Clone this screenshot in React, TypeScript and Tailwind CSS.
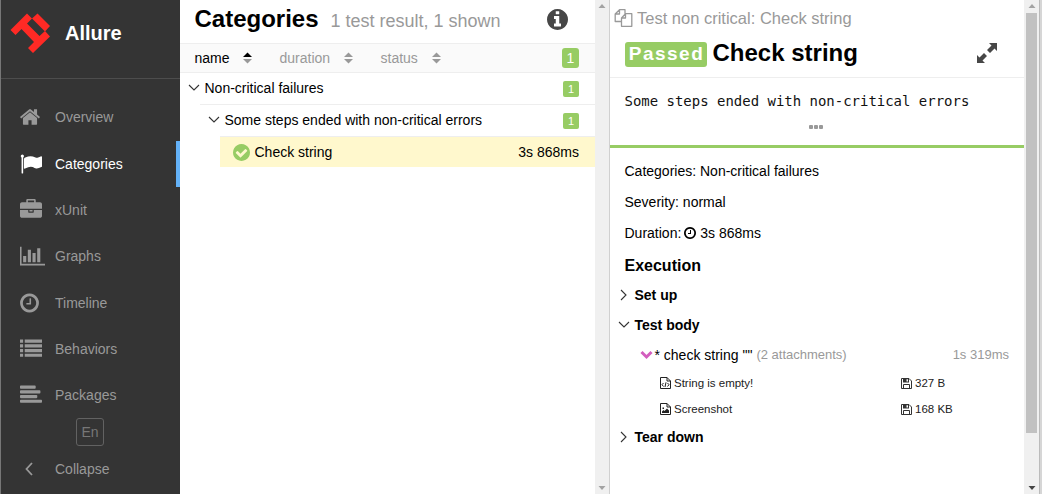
import type { ReactNode } from "react";

const CIRCLE =
  "M1664 896q0 209-103 385.5t-279.5 279.5-385.5 103-385.5-103-279.5-279.5-103-385.5 103-385.5 279.5-279.5 385.5-103 385.5 103 279.5 279.5 103 385.5z";

const PATHS = {
  home: "M1472 992v480q0 26-19 45t-45 19h-384v-384h-256v384h-384q-26 0-45-19t-19-45v-480q0-1 .5-3t.5-3l575-474 575 474q1 2 1 6zm223-69l-62 74q-8 9-21 11h-3q-13 0-21-7l-692-577-692 577q-12 8-24 7-13-2-21-11l-62-74q-8-10-7-23.5t11-21.5l719-599q32-26 76-26t76 26l244 204v-195q0-14 9-23t23-9h192q14 0 23 9t9 23v408l219 182q10 8 11 21.5t-7 23.5z",
  flag: "M320 256q0 72-64 110v1266q0 13-9.5 22.5t-22.5 9.5h-64q-13 0-22.5-9.5t-9.5-22.5v-1266q-64-38-64-110 0-53 37.5-90.5t90.5-37.5 90.5 37.5 37.5 90.5zm1472 64v763q0 25-12.5 38.5t-39.5 27.5q-215 116-369 116-61 0-123.5-22t-108.5-48-115.5-48-142.5-22q-192 0-464 146-17 9-33 9-26 0-45-19t-19-45v-742q0-32 31-55 21-14 79-43 236-120 421-120 107 0 200 29t219 88q38 19 88 19 54 0 117.5-21t110-47 88-47 54.5-21q26 0 45 19t19 45z",
  briefcase:
    "M640 256h512v-128h-512v128zm1152 640v480q0 66-47 113t-113 47h-1472q-66 0-113-47t-47-113v-480h672v160q0 26 19 45t45 19h320q26 0 45-19t19-45v-160h672zm-768 0v128h-256v-128h256zm768-480v384h-1792v-384q0-66 47-113t113-47h352v-160q0-40 28-68t68-28h576q40 0 68 28t28 68v160h352q66 0 113 47t47 113z",
  chart:
    "M512 896v512h-256v-512zM896 384v1024h-256v-1024zM2048 1536v128h-2048v-1536h128v1408zM1280 640v768h-256v-768zM1664 256v1152h-256v-1152z",
  clock:
    "M1024 544v448q0 14-9 23t-23 9h-320q-14 0-23-9t-9-23v-64q0-14 9-23t23-9h224v-352q0-14 9-23t23-9h64q14 0 23 9t9 23zm416 352q0-148-73-273t-198-198-273-73-273 73-198 198-73 273 73 273 198 198 273 73 273-73 198-198 73-273zm224 0q0 209-103 385.5t-279.5 279.5-385.5 103-385.5-103-279.5-279.5-103-385.5 103-385.5 279.5-279.5 385.5-103 385.5 103 279.5 279.5 103 385.5z",
  list: "M0 128h256v256h-256zM384 128h1408v256h-1408zM0 512h256v256h-256zM384 512h1408v256h-1408zM0 896h256v256h-256zM384 896h1408v256h-1408zM0 1280h256v256h-256zM384 1280h1408v256h-1408z",
  align:
    "M64 128h1150q64 0 64 64v128q0 64-64 64h-1150q-64 0-64-64v-128q0-64 64-64zM64 512h1534q64 0 64 64v128q0 64-64 64h-1534q-64 0-64-64v-128q0-64 64-64zM64 896h1280q64 0 64 64v128q0 64-64 64h-1280q-64 0-64-64v-128q0-64 64-64zM64 1280h1664q64 0 64 64v128q0 64-64 64h-1664q-64 0-64-64v-128q0-64 64-64z",
  info:
    "M1152 1376v-160q0-14-9-23t-23-9h-96v-512q0-14-9-23t-23-9h-320q-14 0-23 9t-9 23v160q0 14 9 23t23 9h96v320h-96q-14 0-23 9t-9 23v160q0 14 9 23t23 9h448q14 0 23-9t9-23zm-128-896v-160q0-14-9-23t-23-9h-192q-14 0-23 9t-9 23v160q0 14 9 23t23 9h192q14 0 23-9t9-23z" +
    CIRCLE,
  check:
    "M1412 734q0-28-18-46l-91-90q-19-19-45-19t-45 19l-408 407-226-226q-19-19-45-19t-45 19l-91 90q-18 18-18 46 0 27 18 45l362 362q19 19 45 19 27 0 46-19l543-543q18-18 18-45z" +
    CIRCLE,
};

function Glyph({ name, className, box = "0 0 1792 1792" }: { name: keyof typeof PATHS; className: string; box?: string }) {
  return (
    <svg viewBox={box} className={`shrink-0 fill-current ${className}`} fillRule="evenodd">
      <path d={PATHS[name]} />
    </svg>
  );
}

function Chevron({ right = false }: { right?: boolean }) {
  return (
    <svg viewBox="0 0 12 12" className="mb-px size-3 shrink-0" fill="none" stroke="#333" strokeWidth="1.1">
      <path d={right ? "M3 1L8 6L3 11" : "M1 3L6 8L11 3"} />
    </svg>
  );
}

function NavItem({ icon, label, active }: { icon: ReactNode; label: string; active?: boolean }) {
  return (
    <div
      className={`flex h-[46.3px] items-center border-r-4 pl-[19px] ${
        active ? "border-[#63b1f7] text-white" : "border-transparent text-[#999]"
      }`}
    >
      <span className="flex w-[35px] items-center">{icon}</span>
      {label}
    </div>
  );
}

function Sidebar() {
  return (
    <aside className="flex w-[180px] shrink-0 flex-col border-l border-[#777] bg-[#343434]">
      <div className="flex h-[79px] items-center border-b border-[#4d4d4d] pb-3 pl-[9px]">
        <svg viewBox="10 13 40 40" className="size-10 shrink-0" fill="#ff2a25">
          <path d="M10.500 30L27 13.500L32 18.500L27 23.500L39.500 36L45 31L50 36.500L33 53L28 48L34 42L21.500 29L15.500 35Z" />
          <path d="M32 18.500L37.500 13.500L50 26L45 31.500Z" />
        </svg>
        <span className="ml-[15px] text-[20px] leading-6 font-bold text-white">Allure</span>
      </div>
      <nav className="pt-[15.3px]">
        <NavItem label="Overview" icon={<Glyph name="home" className="ml-[-1px] size-[22px]" />} />
        <NavItem label="Categories" active icon={<Glyph name="flag" className="size-[22px]" />} />
        <NavItem label="xUnit" icon={<Glyph name="briefcase" className="size-[22px]" />} />
        <NavItem label="Graphs" icon={<Glyph name="chart" box="0 0 2048 1792" className="h-[22px] w-[25px]" />} />
        <NavItem label="Timeline" icon={<Glyph name="clock" box="128 0 1536 1792" className="h-[22px] w-[19px]" />} />
        <NavItem label="Behaviors" icon={<Glyph name="list" className="size-[22px]" />} />
        <NavItem label="Packages" icon={<Glyph name="align" className="size-[22px]" />} />
      </nav>
      <div className="ml-[75px] flex h-7 w-7 items-center justify-center rounded-[3px] border border-[#626262] text-[#777]">
        En
      </div>
      <div className="flex h-[46px] items-center pl-[23px] text-[#999]">
        <svg viewBox="0 0 10 14" className="mr-[21px] h-[14px] w-[10px]" fill="none" stroke="currentColor" strokeWidth="1.8">
          <path d="M8 1L2.500 7L8 13" />
        </svg>
        Collapse
      </div>
    </aside>
  );
}

function SortHead({ label, active, className }: { label: string; active?: boolean; className: string }) {
  return (
    <span className={`flex items-center justify-between ${className} ${active ? "text-black" : "text-[#999]"}`}>
      <span className="-mt-px">{label}</span>
      <svg viewBox="0 0 9 12" className="h-3 w-[9px]">
        <path d="M0 5L4.500 0.500L9 5Z" fill={active ? "#000" : "#999"} />
        <path d="M0 7L4.500 11.500L9 7Z" fill="#999" />
      </svg>
    </span>
  );
}

function Count() {
  return (
    <span className="ml-auto flex h-4 w-4 items-center justify-center rounded-[2px] bg-[#97cc64] text-[11px] text-white">
      1
    </span>
  );
}

function Arrow({ down = false, dark = false }: { down?: boolean; dark?: boolean }) {
  return (
    <svg viewBox="0 0 8 4" className={`h-1 w-2 ${dark ? "fill-[#444]" : "fill-[#a3a3a3]"}`}>
      <path d={down ? "M0.500 0H7.500L4 4Z" : "M0.500 4H7.500L4 0Z"} />
    </svg>
  );
}

function CategoriesPane() {
  return (
    <main className="w-[415px] shrink-0">
      <header className="flex h-[43px] items-center pr-[27px] pb-[5px] pl-[14.5px]">
        <h1 className="-mt-px text-[24px] leading-7 font-bold">Categories</h1>
        <span className="mt-[3px] ml-3 text-[18px] text-[#999]">1 test result, 1 shown</span>
        <Glyph name="info" box="128 128 1536 1536" className="ml-auto size-[21px] text-[#474747]" />
      </header>
      <div className="flex h-[30px] items-center border-y border-[#eee] bg-[#fafafa] pr-4 pl-[14.500px]">
        <SortHead label="name" active className="w-[57px]" />
        <SortHead label="duration" className="ml-7 w-[73px]" />
        <SortHead label="status" className="ml-7 w-[60px]" />
        <span className="-mt-px ml-auto flex h-5 w-[17px] items-center justify-center rounded-[3px] bg-[#97cc64] text-white">
          1
        </span>
      </div>
      <div className="flex h-[31px] items-center pr-4 pl-2">
        <Chevron />
        <span className="-mt-px ml-[4.500px]">Non-critical failures</span>
        <Count />
      </div>
      <div className="ml-5 flex h-8 items-center border-t border-[#eee] pr-4 pl-2">
        <Chevron />
        <span className="-mt-[2px] ml-[4.500px]">Some steps ended with non-critical errors</span>
        <Count />
      </div>
      <div className="ml-10 flex h-[31px] items-center border-t border-[#eee] bg-[#fff8cd] pr-4 pl-[13px]">
        <Glyph name="check" box="128 128 1536 1536" className="mr-[4.500px] size-[17px] text-[#97cc64]" />
        Check string
        <span className="ml-auto">3s 868ms</span>
      </div>
    </main>
  );
}

function FilesIcon() {
  return (
    <svg viewBox="0 0 18 18" className="h-[18px] w-[19px] shrink-0" fill="none" stroke="#999" strokeWidth="1.3" strokeLinejoin="round">
      <path d="M7 12.500H0.700V5L5 0.700H10.500V4.700M5 0.700V5H0.700M11 4.700H17.300V17.300H7V9L11 4.700V9H7" />
    </svg>
  );
}

function FileIcon({ image = false }: { image?: boolean }) {
  return (
    <svg viewBox="0 0 11 12" className="h-3 w-[11px] shrink-0" fill="none" stroke="#222">
      <path d="M.5 .5H7L10.500 4V11.500H.5ZM7 .5V4H10.500" />
      {image ? (
        <path d="M2 10V8.500L3.500 7L4.500 8L7 5.500L9 7.500V10ZM2.500 4.500H4V6H2.500Z" fill="#222" stroke="none" />
      ) : (
        <path d="M3.500 6L2 7.700L3.500 9.500M7.500 6L9 7.700L7.500 9.500M6 5.300L5 10" />
      )}
    </svg>
  );
}

function SaveIcon() {
  return (
    <svg viewBox="0 0 11 11" className="h-[11px] w-[11px] shrink-0" fill="none" stroke="#333">
      <path d="M.5 .5H8L10.500 3V10.500H.5ZM2.500 10.500V6.500H8.500V10.500" />
      <path d="M2 .5H8V4.500H2Z" fill="#333" stroke="none" />
      <path d="M5.500 1.200H7V3.500H5.500Z" fill="#fff" stroke="none" />
    </svg>
  );
}

function Attachment({ name, size, image }: { name: string; size: string; image?: boolean }) {
  return (
    <div className="flex h-[26px] items-center pl-[50px] text-[11.500px] text-[#222]">
      <span className="flex w-[241px] items-center gap-[3px]">
        <FileIcon image={image} />
        {name}
      </span>
      <span className="flex items-center gap-[3px]">
        <SaveIcon />
        {size}
      </span>
    </div>
  );
}

function Section({ title, right }: { title: string; right?: boolean }) {
  return (
    <div className="flex h-[30px] items-center pl-2 font-bold">
      <Chevron right={right} />
      <span className="ml-[4.500px]">{title}</span>
    </div>
  );
}

function DetailsPane() {
  return (
    <section className="w-[414px] shrink-0">
      <header className="h-[78px] border-b border-[#eee] pt-[7px]">
        <div className="flex h-[22px] items-center gap-1 pl-1 text-[16.500px] text-[#999]">
          <FilesIcon />
          Test non critical: Check string
        </div>
        <div className="mt-[10px] flex h-7 items-center pl-[14.500px]">
          <span className="mt-[2px] flex h-[25px] w-[82px] items-center justify-center rounded-[3px] bg-[#97cc64] pl-[2px] text-[19px] font-bold tracking-[1.500px] text-white">
            Passed
          </span>
          <h2 className="ml-[6px] text-[24px] leading-7 font-bold">Check string</h2>
          <svg viewBox="0 0 22 22" className="ml-auto mr-[26px] size-[22px]" fill="#474747">
            <path d="M13 1H21V9L18.500 6.500L14 11L11 8L15.500 3.500ZM1 13L3.500 15.500L8 11L11 14L6.500 18.500L9 21H1Z" />
          </svg>
        </div>
      </header>
      <div className="h-[70px] border-b-[3px] border-[#97cc64] pt-[13px] pl-[14.500px]">
        <pre className="font-['DejaVu_Sans_Mono',monospace] text-[13.970px] leading-5 text-[#111]">
          Some steps ended with non-critical errors
        </pre>
        <div className="mt-[14px] ml-[184.500px] flex gap-px">
          <i className="size-1 rounded-[1px] bg-[#999]" />
          <i className="size-1 rounded-[1px] bg-[#999]" />
          <i className="size-1 rounded-[1px] bg-[#999]" />
        </div>
      </div>
      <div className="mt-[7px] flex h-[31px] items-center pl-[14.500px]">Categories: Non-critical failures</div>
      <div className="flex h-[31px] items-center pl-[14.500px]">Severity: normal</div>
      <div className="flex h-[31px] items-center pl-[14.500px]">
        Duration:
        <Glyph name="clock" box="128 128 1536 1536" className="mr-1 ml-[3px] size-3" />
        3s 868ms
      </div>
      <h3 className="flex h-8 items-center pt-[3px] pl-[14.500px] text-[16px] font-bold">Execution</h3>
      <Section title="Set up" right />
      <Section title="Test body" />
      <div className="flex h-[30px] items-center pr-[15px] pl-[30px]">
        <svg viewBox="0 0 13 10" className="h-[10px] w-[13px]" fill="none" stroke="#d35ebe" strokeWidth="3">
          <path d="M1.500 2L6.500 7L11.500 2" />
        </svg>
        <span className="ml-[1.500px]">* check string ""</span>
        <span className="ml-1 text-[13px] text-[#999]">(2 attachments)</span>
        <span className="ml-auto text-[13px] text-[#999]">1s 319ms</span>
      </div>
      <Attachment name="String is empty!" size="327 B" />
      <Attachment name="Screenshot" size="168 KB" image />
      <Section title="Tear down" right />
    </section>
  );
}

export default function App() {
  return (
    <div className="flex h-[494px] w-[1042px] overflow-hidden bg-white font-['Liberation_Sans',Arial,sans-serif] text-[14px] leading-5 whitespace-nowrap text-black">
      <Sidebar />
      <CategoriesPane />
      <div className="flex w-[15px] shrink-0 flex-col items-center justify-between border-r border-[#d0d0d0] bg-[#f0f0f0] pt-1 pb-1">
        <Arrow />
        <Arrow down />
      </div>
      <DetailsPane />
      <div className="flex w-[15px] shrink-0 flex-col items-center bg-[#f0f0f0] pt-1">
        <Arrow />
        <div className="mt-[5px] h-[420px] w-[11px] bg-[#c1c1c1]" />
        <div className="mt-auto mb-1 flex">
          <Arrow down dark />
        </div>
      </div>
      <div className="w-[3px] shrink-0 border-l border-[#bbb] bg-[#d6d6d6]" />
    </div>
  );
}
